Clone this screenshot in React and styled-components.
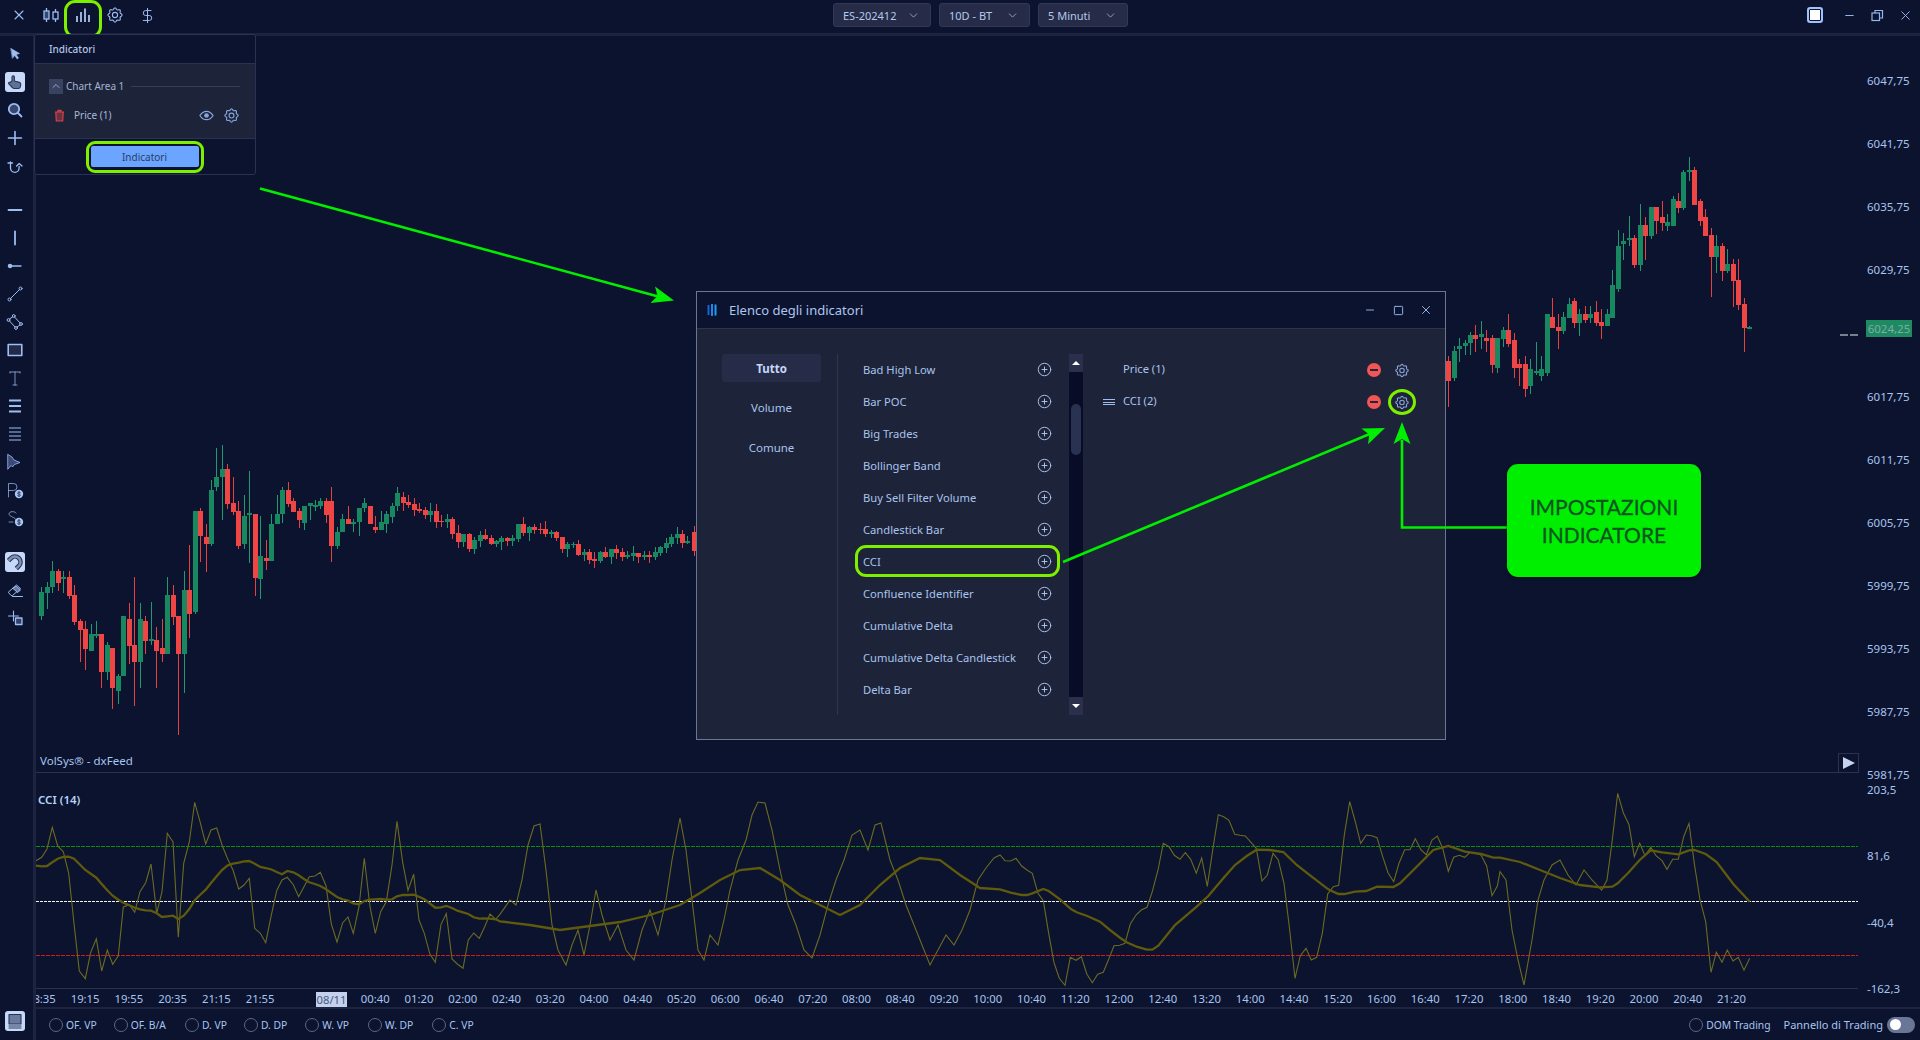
import React from "react";
import styled, { createGlobalStyle } from "styled-components";
import { ChevronDown, ChevronUp, CirclePlus, DollarSign, X, Minus, Square } from "lucide-react";

const FONT = '"Noto Sans", "Open Sans", "Liberation Sans", sans-serif';
const LIME = "#7df000";
const ARROW = "#00ee00";

const Global = createGlobalStyle`
  html, body { margin: 0; padding: 0; background: #0b132e; }
  * { box-sizing: border-box; }
  #root { width: 1920px; height: 1040px; }
`;

const Page = styled.div`
  position: relative; width: 1920px; height: 1040px; overflow: hidden;
  display: flex; flex-direction: column;
  background: #0b132e; color: #a9c4ee; font: 11px ${FONT};
`;
const TopBar = styled.header`
  flex: 0 0 36px; display: flex; align-items: flex-start; position: relative;
  border-bottom: 3px solid #1e2440; padding: 0 0 0 3px;
`;
const TopIcon = styled.div`
  position: relative; width: 32px; height: 30px; display: flex; align-items: center; justify-content: center;
  color: #9dbdf3;
  ${(p) => p.$marked && `&::after { content: ""; position: absolute; left: -3px; right: -3px; top: 0; height: 32px; border: 3px solid ${LIME}; border-radius: 11px; }`}
`;
const Selectors = styled.div`
  position: absolute; left: 833px; top: 3px; display: flex; gap: 8px;
`;
const Selector = styled.div`
  width: ${(p) => p.$w}px; height: 24px; display: flex; align-items: center; justify-content: space-between;
  padding: 0 10px 0 9px; background: #262c47; border: 1px solid #31375a; border-radius: 3px; color: #b4c9ee; font-size: 11px;
`;
const WindowCtl = styled.div`
  margin-left: auto; display: flex; align-items: center; height: 30px; padding-right: 1px; color: #95b6ee;
`;
const CtlBtn = styled.div`
  width: 28px; display: flex; justify-content: center;
`;
const LayoutBtn = styled.div`
  width: 16px; height: 16px; border: 2px solid #9fc2ff; border-radius: 3px; background: #fff; margin-right: 12px; box-shadow: inset 0 0 0 1px #0b132e;
`;
const Body = styled.div`
  flex: 1; display: flex; min-height: 0;
`;
const LeftTools = styled.aside`
  flex: 0 0 36px; display: flex; flex-direction: column; align-items: center; border-right: 3px solid #1e2440;
  padding: 4px 3px 5px 0;
`;
const ToolBtn = styled.div`
  flex: 0 0 28px; width: 20px; display: flex; align-items: center; justify-content: center; color: #9dbdf3;
  ${(p) => p.$on && `
    & > svg { background: #c7d9fa; border-radius: 3px; color: #2a3552; }
  `}
`;
const ToolGap = styled.div`flex: 0 0 16px;`;
const ToolSpacer = styled.div`flex: 1;`;
const Right = styled.main`
  flex: 1; display: flex; flex-direction: column; min-width: 0;
`;
const PriceRow = styled.section`
  flex: 0 0 737px; min-height: 0; display: flex; position: relative;
`;
const ChartSvg = styled.svg`
  display: block; flex: 0 0 1822px;
`;
const PriceLabel = styled.div`
  height: 16px; line-height: 16px; font-size: 11.5px; color: #a9c4ee; white-space: nowrap; padding-left: 9px;
`;
const PriceAxis = styled.div`
  flex: 0 0 62px; height: 737px; display: flex; flex-direction: column; gap: 47px; padding-top: 37px;
`;
const PriceTag = styled.div`
  position: relative; top: -5px; left: 8px; width: 46px; height: 17px; line-height: 17px; text-align: center; background: #1d8a62;
  color: #84a9a8; font-size: 11.5px;
`;
const Source = styled.div`
  position: absolute; left: 4px; top: 717px; font-size: 11.5px; color: #a9c4ee;
`;
const PlayBtn = styled.div`
  position: absolute; left: 1802px; top: 717px; width: 21px; height: 20px; border: 1px solid #2a3152; display: flex; align-items: center; justify-content: center;
  &::before { content: ""; width: 0; height: 0; border-style: solid; border-width: 6px 0 6px 12px; border-color: transparent transparent transparent #c4d3f2; }
`;
const CciRow = styled.section`
  flex: 0 0 217px; min-height: 0; display: flex; position: relative;
`;
const CciAxis = styled.div`
  flex: 0 0 62px; height: 217px; display: flex; flex-direction: column; gap: 50.3px; padding-top: 9px;
`;
const CciTitle = styled.div`
  position: absolute; left: 2px; top: 19px; font-weight: 600; font-size: 11.5px; color: #b9d2f8;
`;
const TimeAxis = styled.div`
  flex: 0 0 17px; display: flex; overflow: hidden; background: #0b132e; margin-right: 62px;
`;
const Divider = styled.div`flex: 0 0 ${(p) => p.$h}px; background: #1e2440;`;
const Tick = styled.div`
  flex: 0 0 43.75px; text-align: center; line-height: 17px; font-size: 11.3px; color: #a9c4ee; white-space: nowrap;
  &:first-child { margin-left: -16.5px; }
`;
const DateTick = styled.div`
  flex: 0 0 31px; margin-left: 34px; margin-right: 6.4px; text-align: center; line-height: 15px; height: 15px; margin-top: 2px; font-size: 11.3px; background: #c3d1ee; color: #4b5a7e;
`;
const BottomBar = styled.footer`
  flex: 1; display: flex; align-items: center; padding: 0 5px 0 13px;
`;
const RadioItem = styled.label`
  display: flex; align-items: center; gap: 3px; margin-right: ${(p) => p.$mr || 0}px; font-size: 10.3px; color: #a9c4ee; white-space: nowrap;
  &::before { content: ""; width: 12px; height: 12px; border-radius: 50%; border: 1px solid #5b6685; }
`;
const BarRight = styled.div`
  margin-left: auto; display: flex; align-items: center;
`;
const Toggle = styled.div`
  width: 28px; height: 16px; border-radius: 8px; background: #6a7696; margin-left: 4px; padding: 2px 3px;
  &::before { content: ""; display: block; width: 11px; height: 11px; margin-top: 0.5px; border-radius: 50%; background: #fff; }
`;
const Popup = styled.div`
  position: absolute; left: 34px; top: 34px; width: 222px; height: 141px; border: 1px solid #2a3152; border-radius: 3px;
  background: #0b132e; display: flex; flex-direction: column; z-index: 3;
`;
const PopupHead = styled.div`
  flex: 0 0 29px; display: flex; align-items: center; padding-left: 14px; font-size: 10px; font-weight: 500; color: #b4c4e4; border-bottom: 1px solid #2a3152;
`;
const PopupBody = styled.div`
  flex: 0 0 75px; background: #1d2338; border-bottom: 1px solid #2a3152; padding: 14px 11px 0 14px; display: flex; flex-direction: column; gap: 11px;
`;
const AreaRow = styled.div`
  display: flex; align-items: center; gap: 3px; height: 16px; color: #a4b4d6; font-size: 10px;
`;
const Collapse = styled.div`
  width: 14px; height: 15px; background: #3a4262; color: #b8c6e6; display: flex; align-items: center; justify-content: center;
`;
const AreaLine = styled.div`flex: 1; height: 1px; background: #353c5c; margin: 0 4px;`;
const PriceItem = styled.div`
  display: flex; align-items: center; height: 20px; color: #a8b9da; font-size: 10px; padding-left: 5px;
`;
const PriceName = styled.span`flex: 1; margin-left: 9px;`;
const IconCell = styled.span`
  display: flex; align-items: center; justify-content: center; width: 25px; color: #86a5dc;
`;
const PopupFoot = styled.div`flex: 1; display: flex; align-items: center; justify-content: center; padding-right: 1px;`;
const PrimaryBtn = styled.div`
  position: relative; width: 108px; height: 21px; background: #6ba5ff; border-radius: 2px; color: #2b3d63; font-size: 10px;
  display: flex; align-items: center; justify-content: center;
  &::after { content: ""; position: absolute; left: -5px; right: -5px; top: -5px; bottom: -6px; border: 3px solid ${LIME}; border-radius: 9px; }
`;
const Modal = styled.div`
  position: absolute; left: 696px; top: 291px; width: 750px; height: 449px; border: 1px solid #6d7590; background: #1d2338;
  display: flex; flex-direction: column; z-index: 2;
`;
const ModalHead = styled.div`
  flex: 0 0 37px; display: flex; align-items: center; padding: 0 9px 0 10px; background: #0b132e; border-bottom: 1px solid #2c3353; color: #afc6ee; font-size: 13px; gap: 8px;
`;
const ModalTitle = styled.span`flex: 1;`;
const ModalCtl = styled.span`
  width: 20px; display: flex; justify-content: center; color: #9dbdf3;
`;
const ModalBody = styled.div`
  flex: 1; display: flex; padding: 25px 0 24px 25px;
`;
const Tabs = styled.nav`
  flex: 0 0 116px; display: flex; flex-direction: column; gap: 11.5px; border-right: 1px solid #2f3654; padding-right: 16px;
`;
const Tab = styled.div`
  height: 28px; display: flex; align-items: center; justify-content: center; border-radius: 3px; font-size: 11.5px;
  color: ${(p) => (p.$on ? "#c5d8fb" : "#a9c4ee")}; font-weight: ${(p) => (p.$on ? 700 : 400)}; background: ${(p) => (p.$on ? "#262c47" : "transparent")};
`;
const List = styled.div`
  flex: 0 0 231px; margin-top: -1px; display: flex; flex-direction: column;
`;
const ListRow = styled.div`
  position: relative; flex: 0 0 32px; display: flex; align-items: center; justify-content: space-between; padding: 0 17px 0 25px; font-size: 11.2px; color: #a9c4ee;
  ${(p) => p.$marked && `&::after { content: ""; position: absolute; left: 17px; right: 9px; top: 0; bottom: 0; border: 3px solid ${LIME}; border-radius: 11px; }`}
`;
const Scroll = styled.div`
  flex: 0 0 14px; display: flex; flex-direction: column; background: #080c26;
`;
const ScrollBtn = styled.div`
  flex: 0 0 18px; background: #2a304c; display: flex; align-items: center; justify-content: center;
  &::before { content: ""; width: 0; height: 0; border-style: solid; border-width: ${(p) => (p.$down ? "4px 4px 0" : "0 4px 4px")}; border-color: ${(p) => (p.$down ? "#fff transparent transparent" : "transparent transparent #fff")}; }
`;
const Track = styled.div`flex: 1; padding: 32px 2px 0;`;
const Thumb = styled.div`height: 51px; background: #2a3252; border-radius: 5px;`;
const Active = styled.div`
  flex: 1; display: flex; flex-direction: column; padding: 0 36px 0 20px;
`;
const ActiveRow = styled.div`
  flex: 0 0 32px; display: flex; align-items: center; font-size: 11.2px; color: #a9c4ee;
`;
const Grip = styled.div`
  width: 12px; height: 6px; margin-right: 8px; border-top: 1px solid ${(p) => (p.$on ? "#9dbdf3" : "transparent")}; border-bottom: 1px solid ${(p) => (p.$on ? "#9dbdf3" : "transparent")}; position: relative;
  &::after { content: ""; position: absolute; left: 0; right: 0; top: 1.5px; height: 1px; background: ${(p) => (p.$on ? "#9dbdf3" : "transparent")}; }
`;
const ActiveName = styled.span`flex: 1; padding-bottom: 4px;`;
const RemoveBtn = styled.span`
  width: 14px; height: 14px; border-radius: 50%; background: #f25555; display: flex; align-items: center; justify-content: center; margin-right: 14px;
  &::before { content: ""; width: 8px; height: 2px; background: #23263c; }
`;
const GearCell = styled.span`
  position: relative; width: 14px; height: 14px; display: flex; align-items: center; justify-content: center; color: #8ba6dc;
  ${(p) => p.$marked && `&::after { content: ""; position: absolute; left: -7px; right: -7px; top: -6px; bottom: -6px; border: 3px solid ${LIME}; border-radius: 50%; }`}
`;
const Callout = styled.div`
  position: absolute; left: 1507px; top: 464px; width: 194px; height: 113px; border-radius: 11px; background: ${ARROW};
  display: flex; align-items: center; justify-content: center; text-align: center; z-index: 5;
  color: #0a5424; font: 21px/28px Lato, "Noto Sans", sans-serif; -webkit-text-stroke: 0.3px #0a5424; box-shadow: 0 1px 3px rgba(0,0,0,.5);
`;
const ArrowLayer = styled.svg`
  position: absolute; left: 0; top: 0; width: 1920px; height: 1040px; z-index: 4; pointer-events: none;
`;

/* ---------- candle data: colour, x*3, bodyTop, bodyBottom, wickTop, wickBottom in zoomed units ---------- */
const leftRaw = `G 124 457 529 441 539;G 142 442 458 427 506;G 157 394 442 363 458;R 175 394 428 388 452;G 190 412 418 393 458;R 208 412 467 393 476;R 223 466 545 435 554;R 241 544 569 538 665;R 256 568 626 544 689;G 274 583 632 553 632;G 289 583 587 543 593;R 304 583 695 583 743;G 322 616 695 607 719;R 337 625 743 625 806;G 355 709 752 703 791;G 370 529 709 529 709;R 388 538 617 489 671;R 403 616 665 411 797;G 421 538 665 489 743;R 436 544 602 529 641;G 454 598 602 487 616;R 469 601 632 561 743;R 487 625 641 537 665;G 502 466 641 411 641;R 520 466 530 435 554;R 535 529 641 529 884;G 553 451 641 393 758;R 568 451 521 315 593;G 586 214 515 214 521;R 601 214 287 205 365;R 619 292 311 252 395;G 634 151 311 121 317;G 649 112 142 25 152;G 667 88 112 15 239;R 682 88 191 72 206;R 700 190 215 111 224;R 715 214 317 183 326;G 733 229 311 165 326;G 748 220 224 94 370;R 766 223 413 223 467;G 781 349 418 229 476;R 799 355 364 300 389;G 814 253 364 223 364;G 832 223 253 165 253;G 847 151 223 142 248;R 865 151 191 126 200;R 880 184 215 175 215;R 898 214 239 205 263;G 913 199 248 199 269;G 931 190 199 190 239;G 946 196 199 181 214;G 961 184 199 175 206;R 979 184 224 175 248;R 994 184 317 141 365;G 1012 277 317 262 326;G 1027 238 277 223 277;R 1045 238 253 198 253;G 1060 247 253 238 277;G 1078 205 247 205 287;G 1093 190 205 175 215;R 1111 199 253 199 253;R 1126 262 269 229 278;G 1144 247 269 213 269;G 1159 223 253 213 278;G 1177 199 230 190 248;G 1192 160 199 141 214`;
const rightRaw = `R 25 634 692 618 770;G 43 604 683 589 692;G 58 589 596 564 635;G 76 580 589 571 614;G 91 556 580 547 614;R 106 556 566 526 605;G 124 553 560 514 596;R 139 565 572 541 605;R 157 565 644 556 668;G 172 565 653 565 668;G 190 541 566 532 590;R 205 541 581 492 590;R 223 571 653 550 683;R 238 643 653 628 707;R 256 643 716 619 740;G 271 658 707 628 731;G 289 664 668 577 674;G 304 658 677 619 692;G 322 493 668 493 677;R 337 502 533 445 533;R 355 532 542 492 596;G 370 502 542 487 551;G 388 463 503 445 503;R 403 454 518 445 533;G 418 493 518 478 557;R 436 493 509 469 518;G 451 493 503 469 518;R 469 487 518 454 527;R 484 517 527 478 566;G 502 493 527 478 527;G 517 406 503 361 503;G 535 289 416 241 425;G 550 274 281 250 329;G 568 264 268 199 289;R 583 265 344 256 353;G 601 226 344 163 362;R 616 226 257 202 329;G 634 172 257 172 266;R 649 172 212 172 251;R 667 202 218 154 242;G 682 217 227 193 242;G 700 148 227 139 227;R 715 154 173 130 188;G 730 67 173 60 179;G 748 61 67 22 92;R 763 61 164 52 164;R 781 154 212 148 227;R 796 202 257 178 257;R 814 256 320 235 440;G 829 289 320 256 368;R 847 289 362 280 392;G 862 343 362 298 368;R 880 343 392 328 470;R 895 391 464 328 479;R 913 463 533 445 605;G 928 532 536 529 536`;
const parse = (raw, ox, oy) => raw.split(";").map((s) => {
  const [c, x, a, b, d, e] = s.trim().split(" ");
  return { up: c === "G", x: ox + x / 3, t: oy + a / 3, b: oy + b / 3, wt: oy + d / 3, wb: oy + e / 3 };
});
const interp = (pts, x) => {
  for (let i = 1; i < pts.length; i++) if (x <= pts[i][0]) {
    const [x0, y0] = pts[i - 1]; const [x1, y1] = pts[i];
    return y0 + ((y1 - y0) * (x - x0)) / (x1 - x0);
  }
  return pts[pts.length - 1][1];
};
const midCandles = () => {
  const path = [[397, 497], [420, 505], [440, 520], [470, 545], [490, 538], [530, 527], [550, 530], [565, 545], [590, 563], [620, 551], [660, 553], [680, 535], [697, 537]];
  let seed = 37; const rnd = () => ((seed = (seed * 9301 + 49297) % 233280) / 233280);
  const out = []; let prev = 497;
  for (let x = 403; x < 690; x += 5.47) {
    const close = interp(path, x) + (rnd() - 0.5) * 14;
    const t = Math.min(prev, close); const b = Math.max(prev, close) + 1;
    out.push({ up: close < prev, x, t, b, wt: t - rnd() * 8, wb: b + rnd() * 8 });
    prev = close;
  }
  out.push({ up: false, x: 693.5, t: 532, b: 551, wt: 526, wb: 556 });
  return out;
};
const candles = [...parse(leftRaw, 0, 440), ...midCandles(), ...parse(rightRaw, 1440, 150)];

const Candle = ({ c }) => {
  const col = c.up ? "#17885f" : "#ef4545"; const edge = c.up ? "#1f9a6e" : "#e84040";
  const x = Math.round(c.x);
  return (
    <g shapeRendering="crispEdges">
      <rect x={x} y={c.wt} width={1} height={Math.max(c.wb - c.wt, 1)} fill={edge} />
      <rect x={x - 2} y={c.t} width={5} height={Math.max(c.b - c.t, 1.5)} fill={col} />
    </g>
  );
};

/* ---------- CCI series ---------- */
const z11 = (s) => s.map(([x, y]) => [x / 3, 780 + y / 3]);
const z12 = (s) => s.map(([x, y]) => [1000 + x / 3, 780 + y / 3]);
const z7 = (s) => s.map(([x, y]) => [1600 + x / 3, 740 + y / 3]);
const thin = [
  ...z11([[108,242],[125,232],[141,207],[157,142],[173,198],[190,215],[206,280],[222,430],[238,573],[256,596],[272,517],[289,476],[305,573],[322,510],[338,553],[355,527],[370,381],[388,374],[404,397],[420,335],[437,308],[453,252],[470,400],[486,335],[502,160],[519,186],[535,472],[551,250],[568,186],[584,67],[600,125],[617,192],[633,150],[650,144],[666,195],[683,237],[699,270],[716,327],[732,315],[748,295],[764,445],[781,460],[797,488],[813,410],[830,332],[846,300],[862,292],[880,314],[896,350],[912,320],[928,290],[945,288],[961,277],[978,317],[994,432],[1011,486],[1028,428],[1044,411],[1060,460],[1077,380],[1093,235],[1110,380],[1126,460],[1142,395],[1159,365],[1176,255],[1191,124],[1208,247],[1224,331],[1241,283],[1257,420],[1273,460],[1290,523],[1306,547],[1323,433],[1339,401],[1356,537],[1372,552],[1389,565],[1405,480],[1421,459],[1438,475],[1454,440],[1470,402],[1487,418],[1500,403]]),
  [510,900],[516,905],[522,880],[528,845],[534,826],[540,824],[546,870],[552,925],[558,950],[566,965],[572,945],[578,930],[584,955],[590,925],[596,890],[602,915],[610,940],[618,925],[626,950],[634,960],[642,930],[650,910],[658,935],[666,900],[672,860],[680,818],[686,850],[692,900],[698,950],[704,960],[710,935],[718,945],[724,920],[730,890],[738,860],[746,840],[752,815],[758,802],[765,803],[772,830],[780,870],[788,905],[796,925],[804,950],[812,958],[820,935],[828,905],[836,880],[844,860],[852,835],[860,830],[868,850],[875,825],[881,823],[890,860],[898,880],[906,905],[914,925],[922,945],[930,965],[938,950],[946,935],[954,945],[962,930],[970,910],[978,880],[986,868],[994,858],
  ...z12([[0,225],[15,242],[32,243],[48,235],[65,258],[81,270],[97,280],[114,340],[130,362],[146,460],[162,548],[178,595],[195,616],[211,532],[228,541],[244,530],[260,581],[277,608],[293,583],[310,577],[326,538],[342,497],[359,496],[375,490],[391,432],[408,405],[424,390],[441,382],[457,335],[474,270],[490,190],[507,200],[523,226],[540,238],[556,218],[572,238],[589,280],[605,234],[622,319],[638,210],[655,104],[671,110],[687,121],[704,163],[720,166],[736,168],[753,187],[769,205],[786,303],[802,285],[819,220],[835,240],[852,310],[868,440],[885,595],[901,527],[918,505],[934,540],[950,532],[967,460],[983,342],[1000,320],[1016,316],[1033,165],[1049,65],[1066,125],[1082,190],[1099,165],[1115,167],[1131,173],[1148,230],[1164,278],[1181,305],[1197,250],[1214,209],[1230,209],[1246,176],[1263,210],[1279,224],[1296,180],[1312,168],[1328,205],[1345,274],[1361,232],[1378,226],[1394,232],[1410,217],[1427,220],[1443,225],[1460,258],[1476,347],[1492,318],[1500,275]]),
  [1506,880],[1512,930],[1518,960],[1524,985],[1532,940],[1538,900],[1544,880],[1552,865],[1560,860],[1568,875],[1576,885],[1584,870],[1592,880],
  ...z7([[0,445],[5,450],[21,420],[37,300],[53,160],[70,218],[87,254],[103,350],[119,310],[135,347],[152,322],[168,347],[186,362],[201,388],[218,358],[235,358],[251,290],[267,250],[283,370],[300,480],[317,545],[333,697],[349,637],[366,667],[382,630],[399,663],[415,652],[432,691],[449,655]]),
];
const thick = [
  ...z11([[108,257],[125,259],[141,258],[157,247],[173,236],[190,231],[206,230],[222,236],[238,252],[255,269],[272,281],[289,293],[305,312],[322,331],[338,347],[355,359],[370,368],[388,376],[404,383],[420,388],[437,391],[453,392],[470,400],[486,411],[502,409],[519,407],[535,417],[551,407],[568,387],[584,361],[600,345],[617,329],[633,309],[650,289],[666,270],[683,256],[699,251],[716,248],[732,244],[748,243],[764,251],[781,261],[797,264],[813,268],[830,276],[846,283],[862,273],[880,277],[896,286],[912,297],[928,307],[945,312],[961,318],[978,328],[994,339],[1011,351],[1028,358],[1044,362],[1060,370],[1077,373],[1093,363],[1110,359],[1126,358],[1142,357],[1159,359],[1176,358],[1191,349],[1208,345],[1224,345],[1241,344],[1257,350],[1273,358],[1290,371],[1306,383],[1323,382],[1339,378],[1356,384],[1372,392],[1389,397],[1405,402],[1421,412],[1438,416],[1454,415],[1470,416],[1487,418],[1500,424]]),
  [530,925],[560,930],[590,926],[620,922],[650,915],[680,905],[700,893],[720,880],[740,870],[760,868],[780,880],[800,895],[820,905],[840,915],[860,905],[880,885],[900,868],[920,858],[940,860],[960,875],[980,888],
  ...z12([[0,328],[32,338],[65,345],[81,345],[97,340],[130,327],[146,333],[180,358],[214,388],[230,397],[262,408],[300,425],[330,450],[360,473],[380,487],[410,500],[440,509],[457,509],[475,497],[525,435],[590,380],[625,348],[670,295],[705,255],[740,228],[770,209],[810,210],[850,216],[890,255],[935,290],[985,328],[1015,342],[1033,342],[1065,335],[1099,333],[1131,320],[1180,321],[1200,310],[1250,260],[1300,210],[1345,198],[1395,215],[1443,222],[1480,233],[1500,233]]),
  [1520,862],[1540,870],[1560,878],[1580,885],
  ...z7([[0,442],[37,440],[53,430],[85,398],[119,360],[152,331],[186,337],[235,343],[267,331],[283,330],[317,342],[350,366],[400,432],[449,485]]),
];
const pts = (s) => s.map(([x, y]) => `${x.toFixed(1)},${y.toFixed(1)}`).join(" ");

/* ---------- toolbar icons ---------- */
const Ico = ({ children, fill = "none", size = 20, sw = 1.4 }) => (
  <svg width={size} height={size} viewBox="0 0 20 20" fill={fill} stroke="currentColor" strokeWidth={sw} strokeLinecap="round" strokeLinejoin="round">{children}</svg>
);
const Dollar = ({ cx, cy }) => (
  <g>
    <circle cx={cx} cy={cy} r="4.2" fill="#a9c6f7" stroke="none" />
    <path d={`M${cx + 1.5} ${cy - 1.3}c-.6-.8-3-.8-3 .5s3 .7 3 2-2.4 1.2-3 .5M${cx} ${cy - 2.7}v5.4`} stroke="#2a3552" strokeWidth=".8" fill="none" />
  </g>
);
/* Scalloped eight-lobed gear with a ring in the middle, as in the reference. */
const gearOutline = (() => {
  const out = [];
  for (let i = 0; i < 96; i++) {
    const a = (i / 96) * Math.PI * 2;
    const r = 6.3 + 0.75 * Math.cos(8 * a);
    out.push(`${(8 + r * Math.cos(a)).toFixed(2)},${(8 + r * Math.sin(a)).toFixed(2)}`);
  }
  return out.join(" ");
})();
const Gear = ({ size = 15, sw = 1.2 }) => (
  <svg width={size} height={size} viewBox="0 0 16 16" fill="none" stroke="currentColor" strokeWidth={sw}>
    <polygon points={gearOutline} />
    <circle cx="8" cy="8" r="2.600" />
  </svg>
);
const EyeIcon = () => (
  <svg width="15" height="15" viewBox="0 0 16 16" fill="none" stroke="currentColor" strokeWidth="1.300">
    <path d="M1 8c1.800-3 4.200-4.500 7-4.500S13.200 5 15 8c-1.800 3-4.200 4.500-7 4.500S2.800 11 1 8z" />
    <circle cx="8" cy="8" r="2.500" fill="currentColor" stroke="none" />
  </svg>
);
const Trash = () => (
  <svg width="11" height="13" viewBox="0 0 11 13" fill="#6e3040" stroke="#d2454e" strokeWidth="1.2"><path d="M1 3h9M4 3V1.300h3V3M1.800 3l.5 9h6.400l.5-9z" /></svg>
);
const BarsMark = () => (
  <svg width="14" height="14" viewBox="0 0 14 14" fill="none" strokeWidth="2"><path d="M1.500 2v10" stroke="#1565d8" /><path d="M5 1v12" stroke="#1f86ec" /><path d="M8.500 1.500v11" stroke="#1aa2f0" /></svg>
);
const toolsTop = [
  <Ico key="a" fill="currentColor" sw={0.6}><path d="M6 4.5l8.5 5-3.3 1 2.3 3.6-1.4.9-2.3-3.6-2.2 2.7z" /></Ico>,
  null,
  <Ico key="c" sw={1.8}><circle cx="9" cy="9" r="5.2" fill="#37476f" /><path d="M13 13l3.5 3.5" /></Ico>,
  <Ico key="d" sw={1.6}><path d="M10 3.5v13M3.5 10h13" /></Ico>,
  <Ico key="e" sw={1.3}><path d="M5.5 6v6a4.3 4.3 0 0 0 8.600 0v-1.500M7.500 7H3M17 10l-2.800-2.400L11.600 10" /></Ico>,
];
const Hand = () => (
  <Ico sw={1.1}><path d="M7 9V5a1.2 1.2 0 0 1 2.4 0v4l5 1.4c1 .3 1.5 1 1.4 2l-.5 2.6c-.2 1-1 1.5-2 1.5H9.2c-.8 0-1.4-.4-1.900-1L3.800 11.900c-.8-1 .5-2.200 1.500-1.400z" fill="#5f7196" /></Ico>
);
const Magnet = () => (
  <Ico sw={4.600}>
    <path d="M3.500 8.700L6.100 6.100A5.500 5.500 0 0 1 13.900 13.900L11.300 16.500" strokeLinecap="butt" strokeLinejoin="miter" />
    <path d="M3.500 8.700L6.100 6.100A5.500 5.500 0 0 1 13.900 13.900L11.300 16.500" stroke="#7f90b8" strokeWidth="2.400" strokeLinecap="butt" strokeLinejoin="miter" />
  </Ico>
);
const toolsMid = [
  <Ico key="f" sw={1.8}><path d="M3.500 10h13" /></Ico>,
  <Ico key="g" sw={1.8}><path d="M10 3.500v13" /></Ico>,
  <Ico key="h" sw={1.3}><circle cx="5" cy="10" r="1.600" fill="currentColor" /><path d="M6 10h10" /></Ico>,
  <Ico key="i" sw={1}><circle cx="4.500" cy="15.500" r="1.500" /><circle cx="15.500" cy="4.500" r="1.500" /><path d="M5.500 14.500l9-9" /></Ico>,
  <Ico key="j" sw={1}><circle cx="8.700" cy="4" r="1.400" /><circle cx="3.500" cy="8" r="1.400" /><circle cx="16" cy="12" r="1.400" /><circle cx="11" cy="16" r="1.400" /><path d="M9.500 5l5.600 6M4.500 9l5.600 6M7.500 5l-3 2M15 13l-3 2" /></Ico>,
  <Ico key="k" sw={1.300}><rect x="3.200" y="4.500" width="13.600" height="11" fill="#232a47" strokeWidth="1.600" /></Ico>,
  <Ico key="l" sw={1}><path d="M5 4h10M10 4v13M8 17h4M5 4v1M15 4v1" opacity=".75" /></Ico>,
  <Ico key="m" sw={1.800}><path d="M4 4.500h12M4 10h12M4 15.500h12" strokeLinecap="butt" /></Ico>,
  <Ico key="n" sw={1.200}><path d="M4 4h12M4 8h12M4 12h12M4 16h12" strokeLinecap="butt" /></Ico>,
  <Ico key="o" fill="#3b4a78" sw={0.800}><path d="M3 2.500l4 2.500 2 3 6 2.500-5.500 2-2 2.500-1.500-1.500-3 3.500z" /></Ico>,
  <Ico key="p" sw={0.900}><path d="M3.500 17V3.500h5a3.500 3.500 0 0 1 0 7h-5" opacity=".8" /><Dollar cx={14} cy={14} /></Ico>,
  <Ico key="q" sw={0.900}><path d="M11 5c-1-2-7-2-7 1s7 3 7 6M4 14h4" opacity=".8" /><Dollar cx={14} cy={14} /></Ico>,
];

const indicators = ["Bad High Low", "Bar POC", "Big Trades", "Bollinger Band", "Buy Sell Filter Volume", "Candlestick Bar", "CCI", "Confluence Identifier", "Cumulative Delta", "Cumulative Delta Candlestick", "Delta Bar"];
const priceLabels = ["6047,75", "6041,75", "6035,75", "6029,75", null, "6017,75", "6011,75", "6005,75", "5999,75", "5993,75", "5987,75", "5981,75"];
const cciLabels = ["203,5", "81,6", "-40,4", "-162,3"];
const ticksA = ["18:35", "19:15", "19:55", "20:35", "21:15", "21:55"];
const ticksB = ["00:40","01:20","02:00","02:40","03:20","04:00","04:40","05:20","06:00","06:40","07:20","08:00","08:40","09:20","10:00","10:40","11:20","12:00","12:40","13:20","14:00","14:40","15:20","16:00","16:40","17:20","18:00","18:40","19:20","20:00","20:40","21:20"];
const radios = [["OF. VP", 17], ["OF. B/A", 19], ["D. VP", 17], ["D. DP", 18], ["W. VP", 19], ["W. DP", 19], ["C. VP", 0]];

const head = (x0, y0, x1, y1, len = 22, half = 8.5, notch = 5) => {
  const a = Math.atan2(y1 - y0, x1 - x0); const c = Math.cos(a); const s = Math.sin(a);
  const p = (d, w) => `${(x1 - d * c - w * s).toFixed(1)},${(y1 - d * s + w * c).toFixed(1)}`;
  return `${x1},${y1} ${p(len, half)} ${p(len - notch, 0)} ${p(len, -half)}`;
};

export default function App() {
  return (
    <Page>
      <Global />
      <TopBar>
        <TopIcon><X size={16} strokeWidth={1.6} /></TopIcon>
        <TopIcon>
          <svg width="18" height="16" viewBox="0 0 18 16" fill="none" stroke="currentColor" strokeWidth="1.3"><rect x="2" y="4" width="5" height="8" fill="#36466f" /><path d="M4.500 1v3M4.500 12v3" /><rect x="11" y="5" width="5" height="7" /><path d="M13.500 2v3M13.500 12v3" /></svg>
        </TopIcon>
        <TopIcon $marked>
          <svg width="16" height="16" viewBox="0 0 16 16" fill="none" stroke="#aecdfb" strokeWidth="1.7"><path d="M2 9v6M6 5v10M10 1.500V15M14 8v7" /></svg>
        </TopIcon>
        <TopIcon><Gear size={16} sw={1.1} /></TopIcon>
        <TopIcon><DollarSign size={17} strokeWidth={1.4} /></TopIcon>
        <Selectors>
          <Selector $w={98}>ES-202412 <ChevronDown size={13} strokeWidth={1.3} /></Selector>
          <Selector $w={91}>10D - BT <ChevronDown size={13} strokeWidth={1.3} /></Selector>
          <Selector $w={90}>5 Minuti <ChevronDown size={13} strokeWidth={1.3} /></Selector>
        </Selectors>
        <WindowCtl>
          <LayoutBtn />
          <CtlBtn><Minus size={13} strokeWidth={1.8} /></CtlBtn>
          <CtlBtn>
            <svg width="13" height="13" viewBox="0 0 13 13" fill="none" stroke="currentColor" strokeWidth="1.200"><rect x="1" y="4" width="7.500" height="7.500" /><path d="M4 4V1.500h7.500V9H8.500" /></svg>
          </CtlBtn>
          <CtlBtn><X size={15} strokeWidth={1.5} /></CtlBtn>
        </WindowCtl>
      </TopBar>
      <Body>
        <LeftTools>
          <ToolBtn>{toolsTop[0]}</ToolBtn>
          <ToolBtn $on><Hand /></ToolBtn>
          <ToolBtn>{toolsTop[2]}</ToolBtn>
          <ToolBtn>{toolsTop[3]}</ToolBtn>
          <ToolBtn>{toolsTop[4]}</ToolBtn>
          <ToolGap />
          {toolsMid.map((t, i) => <ToolBtn key={i}>{t}</ToolBtn>)}
          <ToolGap />
          <ToolBtn $on><Magnet /></ToolBtn>
          <ToolBtn><Ico sw={1}><path d="M3.500 12l8-7 4 3.500-8 7H6.500z" /><path d="M8 8.500l4.500 4 3-2.500-4-3.500z" fill="#6c7ba6" /><path d="M7.500 16.500h10" /></Ico></ToolBtn>
          <ToolBtn><Ico sw={1.100}><path d="M8.500 3v10M3.500 8h10" /><rect x="10.500" y="10" width="6.500" height="6.500" strokeWidth="1.300" fill="#34406a" /></Ico></ToolBtn>
          <ToolSpacer />
          <ToolBtn $on>
            <Ico sw={1.100}><rect x="4" y="3.500" width="12" height="9.500" fill="#6a7a9e" /><path d="M4 15h12M4 17h12" /></Ico>
          </ToolBtn>
        </LeftTools>
        <Right>
          <PriceRow>
            <ChartSvg width="1822" height="737" viewBox="36 36 1822 737">
              {candles.map((c, i) => <Candle key={i} c={c} />)}
              <path d="M1840 335h8M1850 335h8" stroke="#77808f" strokeWidth="2" />
              <path d="M36 772.500H1858M1858.500 36V773" stroke="#2a3152" strokeWidth="1" />
            </ChartSvg>
            <PriceAxis>
              {priceLabels.map((l, i) => l ? <PriceLabel key={i}>{l}</PriceLabel> : <PriceTag key={i}>6024,25</PriceTag>)}
            </PriceAxis>
            <Source>VolSys® - dxFeed</Source>
            <PlayBtn />
          </PriceRow>
          <CciRow>
            <ChartSvg width="1822" height="217" viewBox="36 773 1822 217">
              <path d="M36 846.500H1858" stroke="#0a8f0a" strokeDasharray="4 1" />
              <path d="M36 901.500H1858" stroke="#f2f2f2" strokeWidth="1.200" strokeDasharray="3 1" />
              <path d="M36 955.500H1858" stroke="#d81818" strokeDasharray="4 1" />
              <polyline points={pts(thin)} fill="none" stroke="#6d6a22" strokeWidth="1.100" />
              <polyline points={pts(thick)} fill="none" stroke="#5f5a0c" strokeWidth="2.300" />
              <path d="M1858.500 790V988.500H36" stroke="#2a3152" fill="none" />
            </ChartSvg>
            <CciAxis>
              {cciLabels.map((l) => <PriceLabel key={l}>{l}</PriceLabel>)}
            </CciAxis>
            <CciTitle>CCI (14)</CciTitle>
          </CciRow>
          <TimeAxis>
            {ticksA.map((t) => <Tick key={t}>{t}</Tick>)}
            <DateTick>08/11</DateTick>
            {ticksB.map((t) => <Tick key={t}>{t}</Tick>)}
          </TimeAxis>
          <Divider $h={2} />
          <BottomBar>
            {radios.map(([t, mr]) => <RadioItem key={t} $mr={mr}>{t}</RadioItem>)}
            <BarRight>
              <RadioItem $mr={13}>DOM Trading</RadioItem>
              Pannello di Trading
              <Toggle />
            </BarRight>
          </BottomBar>
        </Right>
      </Body>

      <Popup>
        <PopupHead>Indicatori</PopupHead>
        <PopupBody>
          <AreaRow>
            <Collapse><ChevronUp size={12} strokeWidth={1.5} /></Collapse>
            Chart Area 1
            <AreaLine />
          </AreaRow>
          <PriceItem>
            <Trash />
            <PriceName>Price (1)</PriceName>
            <IconCell><EyeIcon /></IconCell>
            <IconCell><Gear /></IconCell>
          </PriceItem>
        </PopupBody>
        <PopupFoot><PrimaryBtn>Indicatori</PrimaryBtn></PopupFoot>
      </Popup>

      <Modal>
        <ModalHead>
          <BarsMark />
          <ModalTitle>Elenco degli indicatori</ModalTitle>
          <ModalCtl><Minus size={12} strokeWidth={1.8} /></ModalCtl>
          <ModalCtl><Square size={11} strokeWidth={2} /></ModalCtl>
          <ModalCtl><X size={14} strokeWidth={1.6} /></ModalCtl>
        </ModalHead>
        <ModalBody>
          <Tabs>
            <Tab $on>Tutto</Tab>
            <Tab>Volume</Tab>
            <Tab>Comune</Tab>
          </Tabs>
          <List>
            {indicators.map((n) => (
              <ListRow key={n} $marked={n === "CCI"}>
                {n}
                <CirclePlus size={15} strokeWidth={1.6} color="#a9bfe8" />
              </ListRow>
            ))}
          </List>
          <Scroll>
            <ScrollBtn />
            <Track><Thumb /></Track>
            <ScrollBtn $down />
          </Scroll>
          <Active>
            <ActiveRow>
              <Grip />
              <ActiveName>Price (1)</ActiveName>
              <RemoveBtn />
              <GearCell><Gear /></GearCell>
            </ActiveRow>
            <ActiveRow>
              <Grip $on />
              <ActiveName>CCI (2)</ActiveName>
              <RemoveBtn />
              <GearCell $marked><Gear /></GearCell>
            </ActiveRow>
          </Active>
        </ModalBody>
      </Modal>

      <Callout>IMPOSTAZIONI<br />INDICATORE</Callout>
      <ArrowLayer viewBox="0 0 1920 1040">
        <path d="M260 188.500L660 297" stroke={ARROW} strokeWidth="2.600" fill="none" />
        <polygon points={head(260, 188.5, 674, 300.5)} fill={ARROW} />
        <path d="M1063 562L1372 433" stroke={ARROW} strokeWidth="2.600" fill="none" />
        <polygon points={head(1063, 562, 1385, 428)} fill={ARROW} />
        <path d="M1507 527.500H1402V440" stroke={ARROW} strokeWidth="2.600" fill="none" />
        <polygon points={head(1402, 527, 1402, 422)} fill={ARROW} />
      </ArrowLayer>
    </Page>
  );
}
